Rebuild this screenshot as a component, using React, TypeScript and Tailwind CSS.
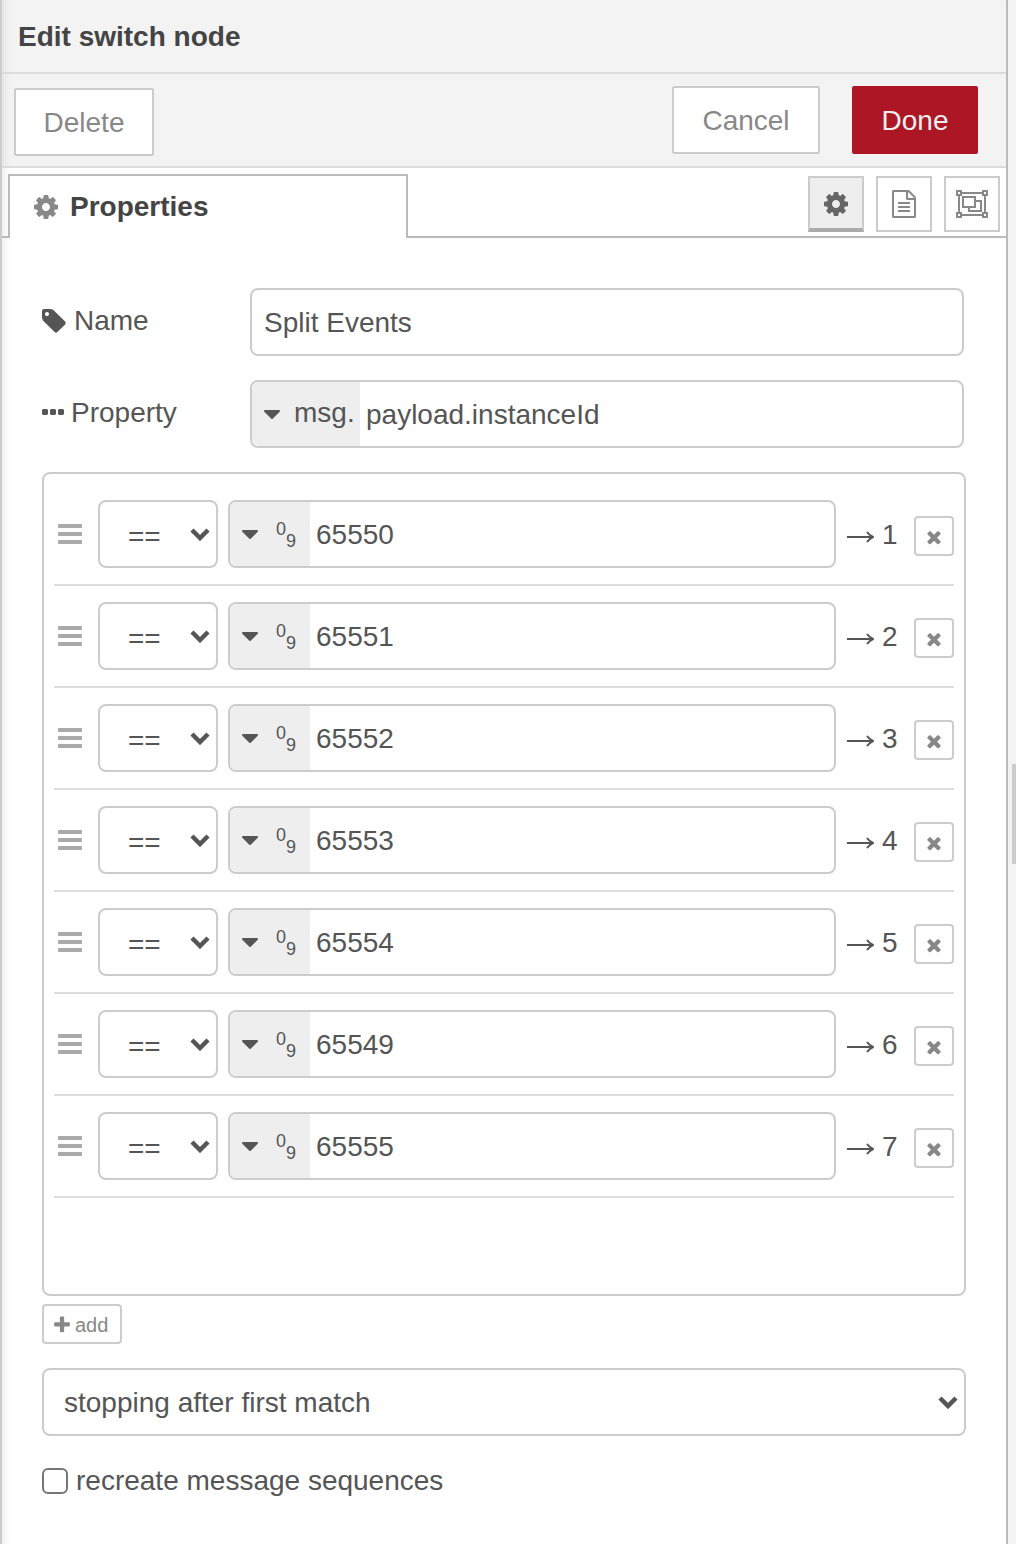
import React, { useState } from "react";

const icons = {
  cog: "M1152 896q0-106-75-181t-181-75-181 75-75 181 75 181 181 75 181-75 75-181zm512-109v222q0 12-8 23t-20 13l-185 28q-19 54-39 91 35 50 107 138 10 12 10 25t-9 23q-27 37-99 108t-94 71q-12 0-26-9l-138-108q-44 23-91 38-16 136-29 186-7 28-36 28h-222q-14 0-24.500-8.500t-11.500-21.500l-28-184q-49-16-90-37l-141 107q-10 9-25 9-14 0-25-11-126-114-165-168-7-10-7-23 0-12 8-23 15-21 51-66.500t54-70.500q-27-50-41-99l-183-27q-13-2-21-12.500t-8-23.500v-222q0-12 8-23t19-13l186-28q14-46 39-92-40-57-107-138-10-12-10-24 0-10 9-23 26-36 98.500-107.500t94.500-71.500q13 0 26 10l138 107q44-23 91-38 16-136 29-186 7-28 36-28h222q14 0 24.500 8.500t11.500 21.500l28 184q49 16 90 37l142-107q9-9 24-9 13 0 25 10 129 119 165 170 7 8 7 22 0 12-8 23-15 21-51 66.500t-54 70.500q26 50 41 98l183 28q13 2 21 12.500t8 23.500z",
  tag: "M576 448q0-53-37.500-90.500t-90.500-37.500-90.500 37.500-37.500 90.500 37.500 90.500 90.500 37.500 90.500-37.500 37.500-90.500zm1067 576q0 53-37 90l-491 492q-39 37-91 37-53 0-90-37l-715-716q-38-37-64.500-101t-26.500-117v-416q0-52 38-90t90-38h416q53 0 117 26.500t102 64.500l715 714q37 39 37 91z",
  ellipsis:
    "M576 736v192q0 40-28 68t-68 28h-192q-40 0-68-28t-28-68v-192q0-40 28-68t68-28h192q40 0 68 28t28 68zm512 0v192q0 40-28 68t-68 28h-192q-40 0-68-28t-28-68v-192q0-40 28-68t68-28h192q40 0 68 28t28 68zm512 0v192q0 40-28 68t-68 28h-192q-40 0-68-28t-28-68v-192q0-40 28-68t68-28h192q40 0 68 28t28 68z",
  bars: "M1664 1344v128q0 26-19 45t-45 19h-1408q-26 0-45-19t-19-45v-128q0-26 19-45t45-19h1408q26 0 45 19t19 45zm0-512v128q0 26-19 45t-45 19h-1408q-26 0-45-19t-19-45v-128q0-26 19-45t45-19h1408q26 0 45 19t19 45zm0-512v128q0 26-19 45t-45 19h-1408q-26 0-45-19t-19-45v-128q0-26 19-45t45-19h1408q26 0 45 19t19 45z",
  plus: "M1600 736v192q0 40-28 68t-68 28h-416v416q0 40-28 68t-68 28h-192q-40 0-68-28t-28-68v-416h-416q-40 0-68-28t-28-68v-192q0-40 28-68t68-28h416v-416q0-40 28-68t68-28h192q40 0 68 28t28 68v416h416q40 0 68 28t28 68z",
  times:
    "M1490 1322q0 40-28 68l-136 136q-28 28-68 28t-68-28l-294-294-294 294q-28 28-68 28t-68-28l-136-136q-28-28-28-68t28-68l294-294-294-294q-28-28-28-68t28-68l136-136q28-28 68-28t68 28l294 294 294-294q28-28 68-28t68 28l136 136q28 28 28 68t-28 68l-294 294 294 294q28 28 28 68z",
  caret:
    "M1408 704q0 26-19 45l-448 448q-19 19-45 19t-45-19l-448-448q-19-19-19-45t19-45 45-19h896q26 0 45 19t19 45z",
  file: "M1596 380q28 28 48 76t20 88v1152q0 40-28 68t-68 28h-1344q-40 0-68-28t-28-68v-1600q0-40 28-68t68-28h896q40 0 88 20t76 48zm-444-244v376h376q-10-29-22-41l-313-313q-12-12-41-22zm384 1528v-1024h-416q-40 0-68-28t-28-68v-416h-768v1536h1280zm-1024-864q0-14 9-23t23-9h704q14 0 23 9t9 23v64q0 14-9 23t-23 9h-704q-14 0-23-9t-9-23v-64zm736 224q14 0 23 9t9 23v64q0 14-9 23t-23 9h-704q-14 0-23-9t-9-23v-64q0-14 9-23t23-9h704zm0 256q14 0 23 9t9 23v64q0 14-9 23t-23 9h-704q-14 0-23-9t-9-23v-64q0-14 9-23t23-9h704z",
};

function Icon({ name, className = "" }: { name: keyof typeof icons; className?: string }) {
  return (
    <svg viewBox="0 0 1792 1792" fill="currentColor" aria-hidden="true" className={`shrink-0 ${className}`}>
      <path d={icons[name]} />
    </svg>
  );
}

function ObjectGroupIcon() {
  return (
    <svg viewBox="0 0 32 28" fill="none" stroke="currentColor" strokeWidth="2" aria-hidden="true" className="h-7 w-8">
      <path d="M5 3H27M5 25H27M3 5V23M29 5V23" />
      <path d="M1 1H5V5H1ZM27 1H31V5H27ZM1 23H5V27H1ZM27 23H31V27H27Z" />
      <path d="M7 7H19V17H7Z" />
      <path d="M19 11H25V21H13V17" />
    </svg>
  );
}

function Chevron() {
  return (
    <svg
      viewBox="0 0 20 14"
      fill="none"
      stroke="currentColor"
      strokeWidth="4.500"
      aria-hidden="true"
      className="pointer-events-none absolute top-1/2 right-2 h-[14px] w-5 -translate-y-1/2"
    >
      <path d="M2 3L10 11L18 3" />
    </svg>
  );
}

function Arrow() {
  return (
    <svg viewBox="0 0 28 14" fill="none" stroke="currentColor" strokeWidth="2" aria-hidden="true" className="mt-[6px] h-[14px] w-7 shrink-0">
      <path d="M1 7H26" />
      <path d="M21 2Q23 5 27 7Q23 9 21 12" />
    </svg>
  );
}

const field = "rounded-lg border-2 border-[#ccc] bg-white";

function Rule({ value, index, onRemove }: { value: string; index: number; onRemove: () => void }) {
  return (
    <li className="flex items-center border-b-2 border-[#ddd] py-4">
      <Icon name="bars" className="mr-[14px] ml-[2px] size-7 text-[#aaa]" />
      <div className="relative mr-[10px] w-[120px] shrink-0">
        <select
          aria-label={`Rule ${index} operator`}
          defaultValue="=="
          className={`h-[68px] w-full appearance-none pt-[6px] pl-7 ${field}`}
        >
          <option>==</option>
          <option>!=</option>
          <option>&lt;</option>
          <option>&gt;</option>
        </select>
        <Chevron />
      </div>
      <div className={`flex h-[68px] min-w-0 flex-1 overflow-hidden ${field}`}>
        <button type="button" aria-label="number" className="flex w-20 shrink-0 items-center bg-[#eee] pl-[6px]">
          <Icon name="caret" className="size-7" />
          <span className="ml-3 flex h-[34px] pt-[2px] text-lg leading-5">
            <span className="self-start">0</span>
            <span className="self-end">9</span>
          </span>
        </button>
        <input aria-label={`Rule ${index} value`} defaultValue={value} className="min-w-0 flex-1 px-[6px] pt-[2px] outline-none" />
      </div>
      <div className="ml-[10px] flex w-[68px] shrink-0 items-center gap-2">
        <Arrow />
        <span className="pt-[2px]">{index}</span>
      </div>
      <button
        type="button"
        aria-label={`Remove rule ${index}`}
        onClick={onRemove}
        className="mt-1 flex size-10 shrink-0 items-center justify-center rounded border-2 border-[#ccc] bg-white pt-[2px] text-[#888]"
      >
        <Icon name="times" className="size-5" />
      </button>
    </li>
  );
}

export default function App() {
  const [rules, setRules] = useState(
    ["65550", "65551", "65552", "65553", "65554", "65549", "65555"].map((value, id) => ({ id, value })),
  );
  return (
    <div className="flex min-h-screen bg-[#f3f3f3] font-['Liberation_Sans',Arial,sans-serif] text-[28px] leading-8 text-[#555]">
      <main className="flex-1 border-r-2 border-l-2 border-r-[#bbb] border-l-[#ccc] bg-white shadow-[inset_8px_0_8px_-6px_rgba(0,0,0,0.08)]">
        <header className="border-b-2 border-[#ddd] bg-black/[0.047] px-4 pt-[21px] pb-[19px]">
          <h1 className="text-[28px] leading-8 font-bold text-[#444]">Edit switch node</h1>
        </header>
        <div className="flex items-start border-b-2 border-[#ddd] bg-black/[0.047] pt-3 pr-7 pb-[10px] pl-3">
          <button type="button" className="mt-[2px] h-[68px] w-[140px] rounded-xs border-2 border-[#ccc] bg-white pt-[2px] text-[#888]">
            Delete
          </button>
          <button type="button" className="mr-8 ml-auto h-[68px] w-[148px] rounded-xs border-2 border-[#ccc] bg-white pt-[2px] text-[#888]">
            Cancel
          </button>
          <button type="button" className="h-[68px] w-[126px] rounded-xs bg-[#ad1625] pt-[2px] text-[#eee]">
            Done
          </button>
        </div>

        <nav className="flex pt-[6px]" aria-label="Editor sections">
          <div className="w-[6px] border-b-2 border-[#bbb]" />
          <button
            type="button"
            className="flex h-16 w-[400px] items-center gap-[10px] border-2 border-b-0 border-[#bbb] pl-[22px] font-bold text-[#444]"
          >
            <Icon name="cog" className="size-7 text-[#888]" />
            Properties
          </button>
          <div className="flex flex-1 items-start justify-end gap-3 border-b-2 border-[#bbb] pt-[2px] pr-[6px] text-[#888]">
            <button type="button" aria-label="Properties" className="flex size-14 items-center justify-center border-2 border-b-4 border-[#ccc] border-b-[#aaa] bg-[#eee] pt-[2px] text-[#666]">
              <Icon name="cog" className="size-7" />
            </button>
            <button type="button" aria-label="Description" className="flex size-14 items-center justify-center border-2 border-[#ccc] bg-white">
              <Icon name="file" className="size-7" />
            </button>
            <button type="button" aria-label="Appearance" className="flex size-14 items-center justify-center border-2 border-[#ccc] bg-white">
              <ObjectGroupIcon />
            </button>
          </div>
        </nav>

        <form className="px-10 pt-[50px]" onSubmit={(e) => e.preventDefault()}>
          <div className="mr-[2px] mb-6 flex items-center">
            <label htmlFor="name" className="flex w-[208px] shrink-0 items-center gap-[6px] pb-[2px]">
              <Icon name="tag" className="-ml-[2px] size-7" />
              Name
            </label>
            <input id="name" defaultValue="Split Events" className={`h-[68px] min-w-0 flex-1 px-3 pt-[2px] outline-none ${field}`} />
          </div>
          <div className="mr-[2px] mb-6 flex items-center">
            <label htmlFor="property" className="flex w-[208px] shrink-0 items-center gap-1 pb-[2px]">
              <Icon name="ellipsis" className="-ml-[3px] size-7" />
              Property
            </label>
            <div className={`flex h-[68px] min-w-0 flex-1 overflow-hidden ${field}`}>
              <button type="button" className="flex w-[108px] shrink-0 items-center gap-2 bg-[#eee] pl-[6px]">
                <Icon name="caret" className="size-7" />
                <span className="pb-[2px]">msg.</span>
              </button>
              <input id="property" defaultValue="payload.instanceId" className="min-w-0 flex-1 px-[6px] pt-[2px] outline-none" />
            </div>
          </div>

          <ol className={`min-h-[824px] p-[10px] ${field}`}>
            {rules.map((rule, i) => (
              <Rule
                key={rule.id}
                value={rule.value}
                index={i + 1}
                onRemove={() => setRules(rules.filter((r) => r.id !== rule.id))}
              />
            ))}
          </ol>

          <button
            type="button"
            onClick={() => setRules([...rules, { id: Date.now(), value: "" }])}
            className="mt-2 flex h-10 w-20 items-center gap-[3px] rounded border-2 border-[#ccc] bg-white pt-[2px] pl-2 text-xl text-[#888]"
          >
            <Icon name="plus" className="size-5" />
            add
          </button>

          <div className="relative mt-6">
            <select aria-label="Match mode" className={`h-[68px] w-full appearance-none px-5 pt-[2px] ${field}`}>
              <option>stopping after first match</option>
              <option>checking all rules</option>
            </select>
            <Chevron />
          </div>

          <label className="mt-[29px] flex items-center gap-2">
            <input type="checkbox" className="size-[26px] appearance-none rounded-md border-2 border-[#767676] bg-white checked:bg-[#767676]" />
            recreate message sequences
          </label>
        </form>
      </main>
      <div className="flex w-2 items-center justify-end pt-[84px]">
        <div className="h-[100px] w-1 bg-[#ccc]" />
      </div>
    </div>
  );
}
